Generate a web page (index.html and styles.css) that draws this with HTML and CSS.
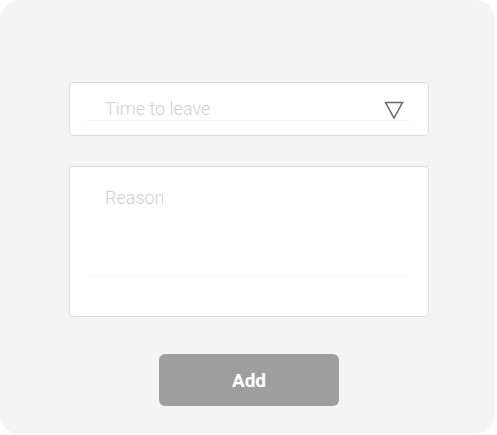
FILE: index.html
```html
<!DOCTYPE html>
<html>
<head>
<meta charset="utf-8">
<link rel="stylesheet" href="styles.css">
</head>
<body>
<div class="card">
  <div class="select">
    <div class="field">
      <span class="placeholder">Time to leave</span>
      <svg class="caret" width="20" height="18" viewBox="0 0 20 18"><path d="M1.5 1.5 H18.5 L10 17 Z" fill="none" stroke="#666" stroke-width="1.5" stroke-linejoin="miter"/></svg>
    </div>
  </div>
  <div class="textarea">
    <div class="tfield">
      <span class="placeholder">Reason</span>
    </div>
  </div>
  <button class="add">Add</button>
</div>
</body>
</html>
```
FILE: styles.css
```css
html, body { margin: 0; padding: 0; background: #fff; }
body { font-family: Roboto, "Liberation Sans", sans-serif; }
.card {
  width: 495px;
  height: 434px;
  box-sizing: border-box;
  background: #f4f4f4;
  border-radius: 20px;
  padding: 82px 0 0 69px;
  display: flex;
  flex-direction: column;
}
.select, .textarea {
  width: 360px;
  box-sizing: border-box;
  background: #fff;
  border: 1px solid #dcdcdc;
  border-radius: 4px;
  padding: 0 15px 0 13px;
}
.select { height: 54px; }
.field {
  height: 38px;
  border-bottom: 1px solid #f7f7f7;
  display: flex;
  align-items: flex-end;
  justify-content: space-between;
  padding: 0 9px 1px 22px;
  box-sizing: border-box;
}
.placeholder {
  font-size: 18px;
  font-weight: 300;
  color: #cfcfcf;
  line-height: 20px;
}
.caret { margin-bottom: 0; }
.textarea { height: 151px; margin-top: 30px; }
.tfield {
  height: 109px;
  border-bottom: 1px solid #f7f7f7;
  padding: 21px 0 0 22px;
  box-sizing: border-box;
}
.tfield .placeholder { display: block; }
.add {
  margin: 37px 0 0 90px;
  width: 180px;
  height: 52px;
  border: none;
  border-radius: 6px;
  background: #9e9e9e;
  color: #fff;
  font-family: Roboto, "Liberation Sans", sans-serif;
  font-weight: 700;
  font-size: 19px;
  padding: 0;
}
```
